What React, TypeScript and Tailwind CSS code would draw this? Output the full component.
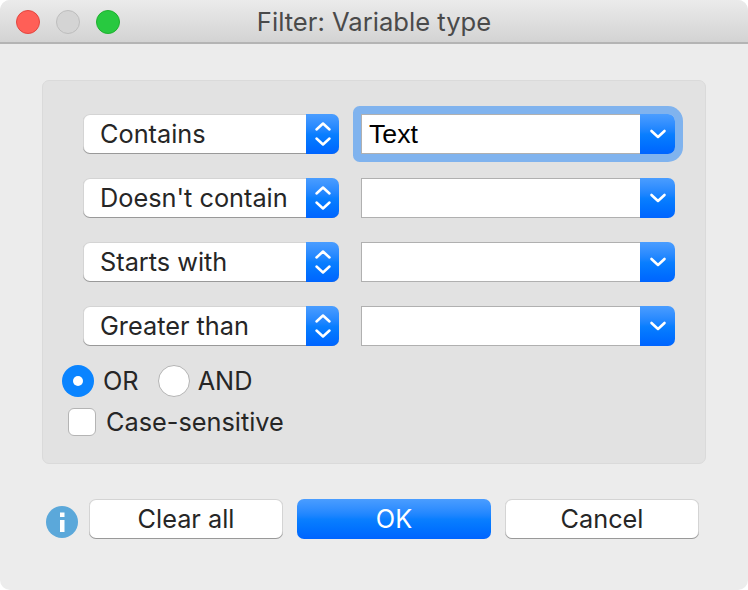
const font = "font-['Inter','Noto_Sans',sans-serif]";

function Stepper() {
  return (
    <svg width="18" height="28" viewBox="0 0 18 28" fill="none" stroke="white" strokeWidth="2.5" strokeLinecap="round" strokeLinejoin="round">
      <path d="M2.5 9.5 L9 3.5 L15.5 9.5" />
      <path d="M2.5 18.5 L9 24.5 L15.5 18.5" />
    </svg>
  );
}

function Chevron() {
  return (
    <svg width="18" height="12" viewBox="0 0 18 12" fill="none" stroke="white" strokeWidth="2.6" strokeLinecap="round" strokeLinejoin="round">
      <path d="M2.5 3 L9 9 L15.5 3" />
    </svg>
  );
}

function Select({ label }: { label: string }) {
  return (
    <div className="flex w-[256px] h-[40px] rounded-[7px] bg-white shadow-[inset_0_0_0_1px_rgba(0,0,0,0.17),inset_0_-1px_0_rgba(0,0,0,0.28)] overflow-hidden">
      <div className={`flex-1 pl-[17px] leading-[40px] text-[25.3px] text-[#262626] ${font}`}>{label}</div>
      <div className="w-[33px] flex items-center justify-center bg-gradient-to-b from-[#4a9dff] via-[#0a7fff] to-[#0064ff]">
        <Stepper />
      </div>
    </div>
  );
}

function Combo({ value, focused }: { value?: string; focused?: boolean }) {
  return (
    <div className={`flex w-[314px] h-[40px] rounded-r-[7px] ${focused ? "shadow-[0_0_0_8px_#80b3ee] rounded-[2px]" : ""}`}>
      <div className="flex-1 border border-[#b0b0b0] border-r-0 bg-white pl-[7px] leading-[38px] text-[26.7px] text-black font-['Liberation_Sans',sans-serif]">
        {value}
      </div>
      <div className="w-[35px] rounded-r-[7px] flex items-center justify-center bg-gradient-to-b from-[#4a9dff] via-[#0a7fff] to-[#0064ff]">
        <Chevron />
      </div>
    </div>
  );
}

function Row({ label, value, focused }: { label: string; value?: string; focused?: boolean }) {
  return (
    <div className="flex gap-[22px]">
      <Select label={label} />
      <Combo value={value} focused={focused} />
    </div>
  );
}

function Button({ label, primary }: { label: string; primary?: boolean }) {
  return (
    <div
      className={`w-[194px] h-[40px] rounded-[7px] text-center leading-[40px] text-[25.3px] ${font} ${
        primary
          ? "text-white bg-gradient-to-b from-[#4a9dff] via-[#0a7fff] to-[#0064ff]"
          : "text-[#262626] bg-white shadow-[inset_0_0_0_1px_rgba(0,0,0,0.17),inset_0_-1px_0_rgba(0,0,0,0.28)]"
      }`}
    >
      {label}
    </div>
  );
}

export default function App() {
  return (
    <div className="w-[748px] h-[590px] bg-white">
      <div className="w-full h-full rounded-[10px] overflow-hidden bg-[#ececec] flex flex-col">
        <div className="relative h-[44px] shrink-0 flex items-center justify-center pt-[2px] border-b-2 border-[#b4b4b4] bg-gradient-to-b from-[#ebebeb] to-[#d3d3d3]">
          <div className="absolute left-[16px] top-[10px] flex gap-[16px]">
            <div className="w-[24px] h-[24px] rounded-full bg-[#ff5f57] border border-[#e2463f]" />
            <div className="w-[24px] h-[24px] rounded-full bg-[#d4d4d4] border border-[#bdbdbd]" />
            <div className="w-[24px] h-[24px] rounded-full bg-[#28c940] border border-[#1fb02f]" />
          </div>
          <span className={`text-[25.6px] text-[#4a4a4a] ${font}`}>Filter: Variable type</span>
        </div>

        <div className="mx-[42px] mt-[36px] h-[384px] w-[664px] shrink-0 rounded-[7px] bg-[#e2e2e2] border border-[#dadada] pl-[19px] pt-[33px]">
          <div className="flex flex-col gap-[24px] pl-[21px]">
            <Row label="Contains" value="Text" focused />
            <Row label="Doesn't contain" />
            <Row label="Starts with" />
            <Row label="Greater than" />
          </div>
          <div className={`mt-[19px] flex items-center leading-[32px] text-[25.3px] text-[#262626] ${font}`}>
            <div className="w-[32px] h-[32px] rounded-full bg-[#0a84ff] flex items-center justify-center">
              <div className="w-[10px] h-[10px] rounded-full bg-white" />
            </div>
            <span className="ml-[9px]">OR</span>
            <div className="ml-[19px] w-[32px] h-[32px] rounded-full bg-white border border-[#b4b4b4]" />
            <span className="ml-[8px]">AND</span>
          </div>
          <div className={`mt-[11px] ml-[6px] flex items-center leading-[28px] text-[25.3px] text-[#262626] ${font}`}>
            <div className="w-[28px] h-[28px] rounded-[6px] bg-white border border-[#b4b4b4]" />
            <span className="ml-[10px]">Case-sensitive</span>
          </div>
        </div>

        <div className="mt-[35px] ml-[46px] flex items-center gap-[14px]">
          <svg width="32" height="32" viewBox="0 0 32 32" className="mt-[6px] -mr-[3px]">
            <circle cx="16" cy="16" r="16" fill="#5ba8da" />
            <rect x="14" y="6.5" width="4.5" height="4.5" fill="white" />
            <rect x="14" y="14" width="4.5" height="12" fill="white" />
          </svg>
          <Button label="Clear all" />
          <Button label="OK" primary />
          <Button label="Cancel" />
        </div>
      </div>
    </div>
  );
}
